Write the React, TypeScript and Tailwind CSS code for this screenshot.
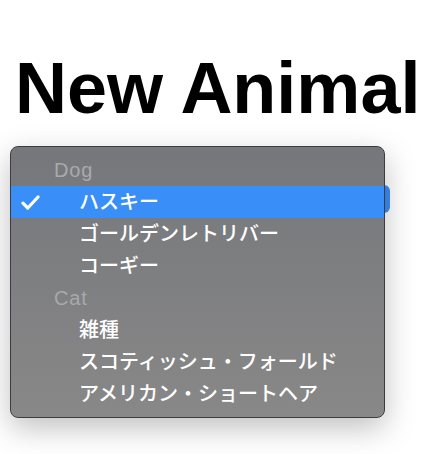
import React from "react";

const dogs = ["ハスキー", "ゴールデンレトリバー", "コーギー"];
const cats = ["雑種", "スコティッシュ・フォールド", "アメリカン・ショートヘア"];

function Check() {
  return (
    <svg width="19" height="15" viewBox="0 0 19 15" className="block">
      <path
        d="M2 8.2 L6.8 13 L17 2"
        fill="none"
        stroke="white"
        strokeWidth="3.2"
        strokeLinecap="round"
        strokeLinejoin="round"
      />
    </svg>
  );
}

function GroupLabel({ text }: { text: string }) {
  return (
    <div className="h-8 flex items-center pl-[43px] text-[20px] tracking-[0.8px] text-[#a9a9ab] font-['Liberation_Sans',sans-serif]">
      {text}
    </div>
  );
}

function Item({ text, selected }: { text: string; selected?: boolean }) {
  return (
    <div
      className={
        "h-8 flex items-center text-[20px] font-medium text-white font-['Noto_Sans_CJK_JP',sans-serif] " +
        (selected ? "bg-[#3a8ef8]" : "")
      }
    >
      <div className="w-[68px] pl-[10px] flex items-center">{selected && <Check />}</div>
      <span className="leading-none -mt-[2px]">{text}</span>
    </div>
  );
}

export default function App() {
  return (
    <div className="relative w-[446px] h-[454px] bg-white overflow-hidden">
      <div className="pt-[52px] pl-[15px]">
        <h1 className="text-[72px] leading-none font-bold text-black font-['Liberation_Sans',Arial,sans-serif]">
          New Animal
        </h1>
        <div className="mt-[61px] w-[375px] h-[28px] rounded-md bg-[#3b8ef7]" />
      </div>

      <div className="absolute left-[10px] top-[146px] w-[375px] h-[272px] rounded-[8px] border border-[#3c3c3e] bg-gradient-to-b from-[#76777b] to-[#888888] py-[7px] shadow-[0_10px_30px_rgba(0,0,0,0.25)] overflow-hidden">
        <GroupLabel text="Dog" />
        {dogs.map((d, i) => (
          <Item key={d} text={d} selected={i === 0} />
        ))}
        <GroupLabel text="Cat" />
        {cats.map((c) => (
          <Item key={c} text={c} />
        ))}
      </div>
    </div>
  );
}
